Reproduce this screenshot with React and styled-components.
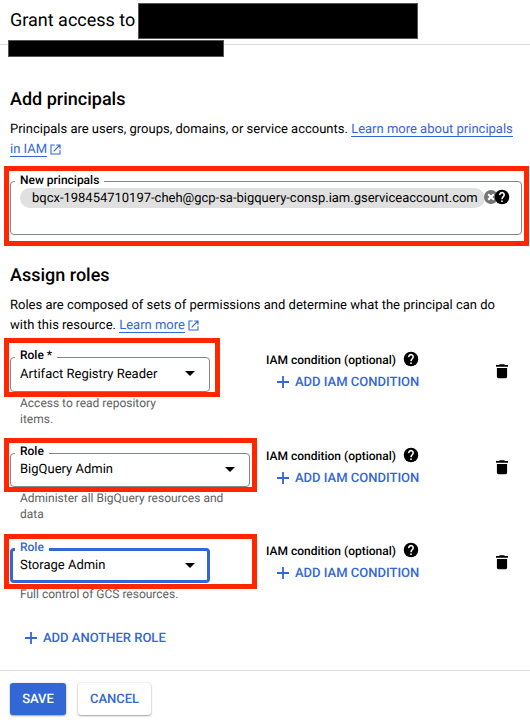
import React from "react";
import styled, { createGlobalStyle, css } from "styled-components";

const BLUE = "#3367d6";

const GlobalStyle = createGlobalStyle`
  *, *::before, *::after { box-sizing: border-box; }
  html, body { margin: 0; padding: 0; background: #fff; }
  body { font-family: Roboto, "Liberation Sans", sans-serif; color: #000; overflow: hidden; text-rendering: geometricPrecision; }
  h1, h2, p { margin: 0; }
`;

const Page = styled.div`
  position: relative;
  display: flex;
  flex-direction: column;
  width: 530px;
  height: 720px;
  overflow: hidden;
  background: #fff;
`;

const Header = styled.header`
  display: flex;
  height: 45px;
  padding: 3px 0 0 10px;
  border-bottom: 1px solid #dadce0;
`;

const Title = styled.h1`
  width: 127.5px;
  font-size: 18px;
  font-weight: 400;
  line-height: 36px;
  white-space: nowrap;
`;

const Redaction = styled.span`
  width: 280px;
  height: 36px;
  background: #000;
  border: 1px solid #555;
`;

const SubRedaction = styled.span`
  position: absolute;
  left: 8px;
  top: 40px;
  width: 216px;
  height: 17px;
  background: #000;
  border: 1px solid #555;
`;

const Section = styled.section`
  padding: ${(p) => p.$top}px 8px 0 10px;
`;

const Heading = styled.h2`
  height: 24px;
  font-size: 18px;
  font-weight: 500;
  line-height: 26px;
`;

const Copy = styled.p`
  margin-top: 8px;
  font-size: 13px;
  line-height: 20px;
  white-space: nowrap;
`;

const Line = styled.span`
  display: flex;
  height: 20px;
  padding-top: 1px;
  white-space: pre;
`;

const Link = styled.a`
  height: 17px;
  color: ${BLUE};
  border-bottom: 1px solid ${BLUE};
`;

const Field = styled.div`
  position: relative;
  display: flex;
  align-items: center;
  width: ${(p) => p.$width}px;
  height: ${(p) => p.$height}px;
  border: ${(p) => (p.$focused ? `3px solid ${BLUE}` : "1px solid #80868b")};
  border-radius: 4px;
`;

const FieldLabel = styled.label`
  position: absolute;
  left: ${(p) => (p.$focused ? 2 : 4)}px;
  top: ${(p) => p.$top}px;
  padding: 0 5px;
  background: #fff;
  color: ${(p) => (p.$focused ? BLUE : "#000")};
  font-size: 12px;
  font-weight: 500;
  line-height: 16px;
  white-space: nowrap;
`;

const PrincipalsField = styled(Field)`
  align-items: flex-start;
  margin-top: 22px;
  padding: 6px 0 0 9px;
`;

const Chip = styled.span`
  width: 465px;
  height: 20px;
  padding-left: 12px;
  border-radius: 10px;
  background: #e0e0e0;
  font-size: 13px;
  line-height: 22px;
  letter-spacing: -0.012px;
  white-space: nowrap;
`;

const ChipIcons = styled.span`
  display: flex;
  align-items: center;
  height: 18px;
  margin-left: -1px;
  & > svg + svg { margin-left: -4px; }
`;

const Roles = styled.div`
  display: flex;
  flex-direction: column;
  margin-top: 13px;
`;

const RoleRow = styled.div`
  display: grid;
  grid-template-columns: 256px 229px 14px;
  height: ${(p) => p.$height}px;
`;

const RoleCell = styled.div`
  padding-top: 9px;
`;

const Value = styled.span`
  flex: 1;
  padding-left: ${(p) => (p.$focused ? 7 : 9)}px;
  margin-top: ${(p) => p.$shift + 2}px;
  font-size: 13px;
  line-height: 20px;
`;

const Arrow = styled.svg`
  margin-right: ${(p) => (p.$focused ? 12 : 14)}px;
  margin-top: ${(p) => p.$shift}px;
`;

const Helper = styled.p`
  padding-left: 10px;
  padding-top: 3px;
  color: #616161;
  font-size: 12px;
  line-height: 16px;
  white-space: pre-line;
`;

const ConditionCell = styled.div`
  padding-top: 4px;
`;

const ConditionLabel = styled.div`
  display: flex;
  align-items: center;
  height: 16px;
  font-size: 12px;
  font-weight: 500;
  & > svg { margin: -2px 0 0 7px; }
`;

const textButton = css`
  display: flex;
  align-items: center;
  padding: 0;
  border: 0;
  background: none;
  color: ${BLUE};
  font: 500 13px/20px Roboto, sans-serif;
  text-rendering: inherit;
  white-space: nowrap;
`;

const AddButton = styled.button`
  ${textButton}
  margin: ${(p) => p.$margin};
  & > svg { margin: -2px 6px 0 0; }
`;

const DeleteButton = styled.button`
  display: flex;
  align-self: start;
  margin-top: 16px;
  padding: 0;
  border: 0;
  background: none;
`;

const Footer = styled.footer`
  display: flex;
  gap: 12px;
  margin-top: auto;
  height: 50px;
  padding: 12px 0 0 10px;
  border-top: 1px solid #dadce0;
`;

const Action = styled.button`
  ${textButton}
  justify-content: center;
  width: ${(p) => p.$width}px;
  height: 32px;
  padding-top: 1px;
  border-radius: 3px;
  background: ${(p) => (p.$primary ? BLUE : "#fff")};
  color: ${(p) => (p.$primary ? "#fff" : BLUE)};
  box-shadow: 0 1px 2px rgba(0, 0, 0, 0.35), 0 0 2px rgba(0, 0, 0, 0.14);
`;

const Highlight = styled.div`
  position: absolute;
  left: 4px;
  top: ${(p) => p.$top}px;
  width: ${(p) => p.$width}px;
  height: ${(p) => p.$height}px;
  border: 5px solid #ff2600;
  pointer-events: none;
`;

const HelpIcon = () => (
  <svg width="16" height="16" viewBox="1 1 22 22">
    <circle cx="12" cy="12" r="10" />
    <path d="M9 9.4a3 3 0 1 1 5.1 1.7C12.9 12.2 12 13 12 15M12 16.8v2.2" fill="none" stroke="#fff" strokeWidth="2.2" />
  </svg>
);

const CancelIcon = () => (
  <svg width="14" height="14" viewBox="2 2 20 20">
    <circle cx="12" cy="12" r="10" fill="#757575" />
    <path d="M8 8l8 8M16 8l-8 8" stroke="#fff" strokeWidth="3" />
  </svg>
);

const ExternalIcon = styled(({ className }) => (
  <svg className={className} width="11" height="11" viewBox="0 0 11 11" fill="none" stroke={BLUE} strokeWidth="1.1">
    <path d="M4.7 1H1v9h9V6.3M6.3 1H10v3.7M10 1L3.7 7.3" />
  </svg>
))`
  margin: 4px 0 0 3px;
`;

const PlusIcon = () => (
  <svg width="12" height="12" viewBox="0 0 12 12">
    <path d="M6 0v12M0 6h12" stroke={BLUE} strokeWidth="1.8" />
  </svg>
);

const TrashIcon = () => (
  <svg width="14" height="15" viewBox="-0.5 0 14 15">
    <path d="M1.4 4h10.2v8.6c0 .9-.7 1.6-1.6 1.6H3c-.9 0-1.6-.7-1.6-1.6zM.5 1h3l.8-.8h4.4l.8.8h3v1.8H.5z" />
  </svg>
);

const roles = [
  { label: "Role *", value: "Artifact Registry Reader", help: "Access to read repository\nitems.", width: 200, height: 35, rowHeight: 96, labelTop: -11, shift: -2 },
  { label: "Role", value: "BigQuery Admin", help: "Administer all BigQuery resources and\ndata", width: 240, height: 34, rowHeight: 95, labelTop: -11, shift: -2 },
  { label: "Role", value: "Storage Admin", help: "Full control of GCS resources.", width: 200, height: 35, rowHeight: 90, labelTop: -12, shift: -1, focused: true },
];

const highlights = [
  { top: 166, width: 525, height: 80 },
  { top: 338, width: 216, height: 59 },
  { top: 438, width: 253, height: 54 },
  { top: 534, width: 253, height: 55 },
];

export default function App() {
  return (
    <Page>
      <GlobalStyle />
      <Header>
        <Title>Grant access to</Title>
        <Redaction />
      </Header>
      <SubRedaction />

      <Section $top={42}>
        <Heading>Add principals</Heading>
        <Copy>
          <Line>
            Principals are users, groups, domains, or service accounts. <Link>Learn more about principals</Link>
          </Line>
          <Line>
            <Link>in IAM</Link>
            <ExternalIcon />
          </Line>
        </Copy>
        <PrincipalsField $width={512} $height={54}>
          <FieldLabel $top={-10}>New principals</FieldLabel>
          <Chip>bqcx-198454710197-cheh@gcp-sa-bigquery-consp.iam.gserviceaccount.com</Chip>
          <ChipIcons>
            <CancelIcon />
            <HelpIcon />
          </ChipIcons>
        </PrincipalsField>
      </Section>

      <Section $top={28}>
        <Heading>Assign roles</Heading>
        <Copy>
          <Line>Roles are composed of sets of permissions and determine what the principal can do</Line>
          <Line>
            with this resource. <Link>Learn more</Link>
            <ExternalIcon />
          </Line>
        </Copy>
        <Roles>
          {roles.map((r) => (
            <RoleRow key={r.value} $height={r.rowHeight}>
              <RoleCell>
                <Field $width={r.width} $height={r.height} $focused={r.focused}>
                  <FieldLabel $focused={r.focused} $top={r.labelTop}>{r.label}</FieldLabel>
                  <Value $focused={r.focused} $shift={r.shift}>{r.value}</Value>
                  <Arrow $focused={r.focused} $shift={r.shift} width="10" height="5" viewBox="0 0 10 5">
                    <path d="M0 0h10L5 5z" />
                  </Arrow>
                </Field>
                <Helper>{r.help}</Helper>
              </RoleCell>
              <ConditionCell>
                <ConditionLabel>
                  IAM condition (optional)
                  <HelpIcon />
                </ConditionLabel>
                <AddButton $margin="5px 0 0 11px">
                  <PlusIcon />
                  ADD IAM CONDITION
                </AddButton>
              </ConditionCell>
              <DeleteButton aria-label="Delete role">
                <TrashIcon />
              </DeleteButton>
            </RoleRow>
          ))}
        </Roles>
        <AddButton $margin="0 0 0 15px">
          <PlusIcon />
          ADD ANOTHER ROLE
        </AddButton>
      </Section>

      <Footer>
        <Action $primary $width={56}>SAVE</Action>
        <Action $width={73}>CANCEL</Action>
      </Footer>
      {highlights.map((h) => (
        <Highlight key={h.top} $top={h.top} $width={h.width} $height={h.height} />
      ))}
    </Page>
  );
}
